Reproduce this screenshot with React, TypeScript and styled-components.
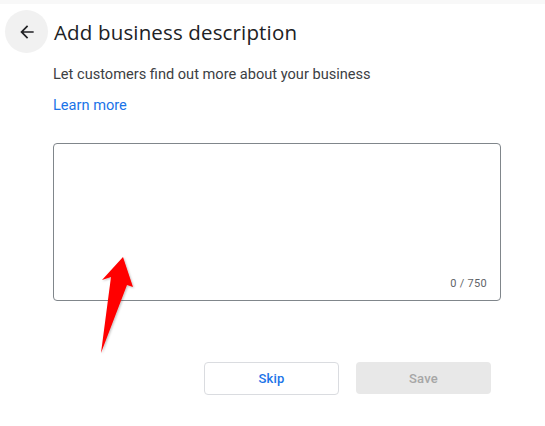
import styled, { createGlobalStyle } from 'styled-components';

const GlobalStyle = createGlobalStyle`
  html, body {
    margin: 0;
    padding: 0;
    background: #fff;
  }
  body {
    font-family: Roboto, "Liberation Sans", Arial, sans-serif;
  }
`;

const Page = styled.div`
  position: relative;
  width: 545px;
  height: 426px;
  overflow: hidden;
  background: #fff;
  border-top: 4px solid #f8f8f8;
  box-sizing: border-box;
`;

const Header = styled.div`
  display: flex;
  align-items: center;
  gap: 6px;
  padding: 6px 0 0 5px;
`;

const BackButton = styled.button`
  width: 43px;
  height: 43px;
  border-radius: 50%;
  border: none;
  background: #f1f1f1;
  display: flex;
  align-items: center;
  justify-content: center;
  padding: 0;
  cursor: pointer;
`;

const Title = styled.h1`
  margin: 0;
  font-family: "Open Sans", Roboto, sans-serif;
  font-weight: 400;
  font-size: 20.5px;
  color: #202124;
  letter-spacing: 0.15px;
`;

const Content = styled.div`
  padding-left: 53px;
  display: flex;
  flex-direction: column;
`;

const Subtitle = styled.p`
  margin: 11px 0 0;
  font-size: 14.6px;
  line-height: 20px;
  color: #3c4043;
`;

const LearnMore = styled.a`
  margin-top: 11px;
  font-size: 14.6px;
  line-height: 20px;
  color: #1a73e8;
  text-decoration: none;
  width: max-content;
`;

const Field = styled.div`
  margin-top: 28px;
  width: 448px;
  height: 158px;
  box-sizing: border-box;
  border: 1px solid #80868b;
  border-radius: 4px;
  display: flex;
  flex-direction: column;
  padding: 10px 13px 10px 13px;
`;

const TextArea = styled.textarea`
  flex: 1;
  border: none;
  outline: none;
  resize: none;
  font-family: inherit;
  font-size: 14px;
  padding: 0;
`;

const Counter = styled.span`
  align-self: flex-end;
  font-size: 11px;
  color: #5f6368;
  letter-spacing: 0.3px;
`;

const ButtonRow = styled.div`
  margin-top: 61px;
  width: 438px;
  display: flex;
  justify-content: flex-end;
  align-items: flex-start;
  gap: 17px;
`;

const Button = styled.button<{ $variant: 'outline' | 'disabled' }>`
  width: 135px;
  height: ${p => (p.$variant === 'outline' ? '33px' : '32px')};
  box-sizing: border-box;
  border-radius: 4px;
  font-family: Roboto, sans-serif;
  font-size: 13px;
  font-weight: 500;
  letter-spacing: 0.2px;
  border: ${p => (p.$variant === 'outline' ? '1px solid #dadce0' : 'none')};
  background: ${p => (p.$variant === 'outline' ? '#fff' : '#e8e8e8')};
  color: ${p => (p.$variant === 'outline' ? '#1a73e8' : '#a6a6a6')};
`;

const Pointer = styled.svg`
  position: absolute;
  left: 0;
  top: 0;
  pointer-events: none;
`;

export default function App() {
  return (
    <Page>
      <GlobalStyle />
      <Header>
        <BackButton aria-label="Back">
          <svg width="20" height="20" viewBox="0 0 24 24">
            <path d="M20 11H7.83l5.59-5.59L12 4l-8 8 8 8 1.41-1.41L7.83 13H20v-2z" fill="#202124" />
          </svg>
        </BackButton>
        <Title>Add business description</Title>
      </Header>
      <Content>
        <Subtitle>Let customers find out more about your business</Subtitle>
        <LearnMore href="#">Learn more</LearnMore>
        <Field>
          <TextArea />
          <Counter>0 / 750</Counter>
        </Field>
        <ButtonRow>
          <Button $variant="outline">Skip</Button>
          <Button $variant="disabled">Save</Button>
        </ButtonRow>
      </Content>
      <Pointer width="545" height="426" viewBox="0 0 545 426">
        <defs>
          <filter id="sh" x="-20%" y="-20%" width="140%" height="140%">
            <feDropShadow dx="1" dy="1" stdDeviation="1" floodColor="#000" floodOpacity="0.25" />
          </filter>
        </defs>
        <path
          d="M123 253 L133 283 L127 281 L101 349 L111 273 L102 276 Z"
          fill="#ff0000"
          filter="url(#sh)"
        />
      </Pointer>
    </Page>
  );
}
